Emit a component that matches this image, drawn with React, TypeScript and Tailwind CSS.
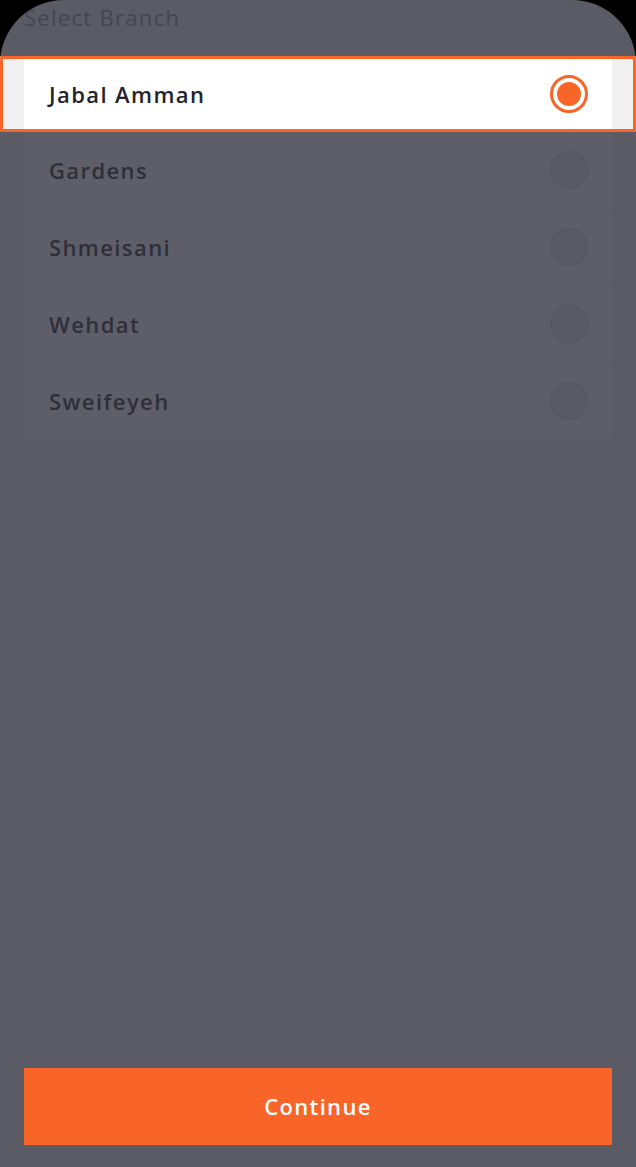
import React, { useState } from 'react';

const BRANCHES = ['Jabal Amman', 'Gardens', 'Shmeisani', 'Wehdat', 'Sweifeyeh'];

export default function App() {
  const [selected, setSelected] = useState(0);

  return (
    <div className="min-h-screen bg-black" style={{ fontFamily: '"Open Sans", "Noto Sans", sans-serif' }}>
      <div className="h-[1167px] bg-[#5b5b66] rounded-t-[64px] flex flex-col overflow-hidden">
        {/* Header */}
        <div className="h-[56px] px-6 pt-[2px]">
          <p className="text-[22px] leading-[30px] text-[#454550] tracking-[1.3px]">Select Branch</p>
        </div>

        {/* Selected row (highlighted above the overlay) */}
        <div className="h-[76px] border-[3px] border-[#f96429] bg-[#f0f0f0] flex">
          <div className="flex-1 mx-[21px] bg-white flex items-center justify-between pl-[25px] pr-[24px]">
            <span className="text-[22px] font-semibold text-[#23232d] tracking-[1.4px]">{BRANCHES[selected]}</span>
            <span className="w-[38px] h-[38px] rounded-full border-[3px] border-[#f96429] flex items-center justify-center">
              <span className="w-[24px] h-[24px] rounded-full bg-[#f96429]"></span>
            </span>
          </div>
        </div>

        {/* Dimmed list */}
        <div className="mx-6 bg-[#5e5e69] flex flex-col">
          {BRANCHES.map((name, i) =>
            i === selected ? null : (
              <button
                key={name}
                onClick={() => setSelected(i)}
                className="h-[77px] flex items-center justify-between pl-[25px] pr-[24px] border-b border-[#5c5c67] text-left"
              >
                <span className="text-[22px] font-semibold text-[#2f2f3a] tracking-[1.4px]">{name}</span>
                <span className="w-[38px] h-[38px] rounded-full border border-[#555560] bg-[#5a5a65]"></span>
              </button>
            )
          )}
        </div>

        <div className="flex-1"></div>

        {/* Continue button */}
        <div className="px-6 pb-[22px]">
          <button className="w-full h-[77px] bg-[#f96429] text-white text-[22px] font-semibold tracking-[1.35px]">
            Continue
          </button>
        </div>
      </div>
    </div>
  );
}
